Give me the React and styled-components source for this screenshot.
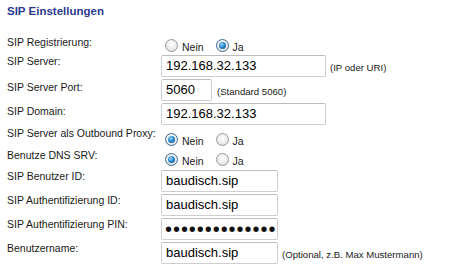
import React from 'react';
import styled, { createGlobalStyle, css } from 'styled-components';

const GlobalStyle = createGlobalStyle`
  html, body {
    margin: 0;
    padding: 0;
    background: #ffffff;
  }
  body {
    font-family: 'Liberation Sans', Arial, sans-serif;
  }
`;

const Page = styled.div`
  width: 459px;
  height: 275px;
  box-sizing: border-box;
  padding: 0 0 0 7px;
  background: #ffffff;
  overflow: hidden;
`;

const Title = styled.h2`
  margin: 0;
  padding: 4px 0 0 0;
  height: 33px;
  box-sizing: border-box;
  font-size: 11.5px;
  line-height: 14px;
  font-weight: bold;
  color: #2b3b8e;
`;

const Row = styled.div`
  display: flex;
  align-items: flex-start;
  height: ${props => props.h || 24}px;
`;

const Label = styled.div`
  width: 154px;
  flex-shrink: 0;
  padding-top: ${props => props.pt || 1}px;
  font-size: 10.5px;
  line-height: 13px;
  color: #1a1a1a;
  white-space: nowrap;
`;

const Value = styled.div`
  display: flex;
  align-items: center;
  padding-top: ${props => props.pt || 1}px;
`;

const Input = styled.div`
  box-sizing: border-box;
  width: ${props => props.w}px;
  height: 22px;
  border: 1px solid #cfcfcf;
  border-top-color: #bdbdbd;
  border-radius: 2px;
  background: #ffffff;
  padding: 0 0 0 4px;
  font-size: 13px;
  line-height: 20px;
  color: #000000;
  white-space: nowrap;
  overflow: hidden;
  ${props => props.secret && css`
    font-size: 20px;
    letter-spacing: 0.95px;
    padding-left: 3px;
    color: #111111;
  `}
`;

const Hint = styled.span`
  margin-left: ${props => props.ml || 4}px;
  padding-top: 3px;
  font-size: 9.6px;
  color: #1a1a1a;
  white-space: nowrap;
`;

const RadioGroup = styled.div`
  display: flex;
  align-items: center;
  padding-left: 4px;
`;

const RadioDot = styled.span`
  box-sizing: border-box;
  width: 13px;
  height: 13px;
  border-radius: 50%;
  border: 1px solid #9a9a9a;
  background: radial-gradient(circle at 50% 40%, #ffffff 0%, #ececec 55%, #d4d4d4 100%);
  display: flex;
  align-items: center;
  justify-content: center;
  ${props => props.checked && css`
    border-color: #3c6d9c;
    &:after {
      content: '';
      width: 7px;
      height: 7px;
      border-radius: 50%;
      background: radial-gradient(circle at 40% 35%, #9fd6f7 0%, #2a8ad0 45%, #0d4f8c 100%);
    }
  `}
`;

const RadioText = styled.span`
  margin: 3px 12px 0 4px;
  font-size: 10.5px;
  color: #1a1a1a;
`;

const Radio = ({ yes }) => (
  <RadioGroup>
    <RadioDot checked={!yes} />
    <RadioText>Nein</RadioText>
    <RadioDot checked={yes} />
    <RadioText>Ja</RadioText>
  </RadioGroup>
);

export default function App() {
  return (
    <Page>
      <GlobalStyle />
      <Title>SIP Einstellungen</Title>

      <Row h={21}>
        <Label pt={3}>SIP Registrierung:</Label>
        <Value pt={5}><Radio yes /></Value>
      </Row>

      <Row>
        <Label>SIP Server:</Label>
        <Value>
          <Input w={165}>192.168.32.133</Input>
          <Hint>(IP oder URI)</Hint>
        </Value>
      </Row>

      <Row>
        <Label pt={3}>SIP Server Port:</Label>
        <Value>
          <Input w={51}>5060</Input>
          <Hint ml={5}>(Standard 5060)</Hint>
        </Value>
      </Row>

      <Row>
        <Label pt={3}>SIP Domain:</Label>
        <Value>
          <Input w={165}>192.168.32.133</Input>
        </Value>
      </Row>

      <Row h={22}>
        <Label pt={1}>SIP Server als Outbound Proxy:</Label>
        <Value pt={6}><Radio /></Value>
      </Row>

      <Row h={21}>
        <Label pt={0}>Benutze DNS SRV:</Label>
        <Value pt={4}><Radio /></Value>
      </Row>

      <Row>
        <Label>SIP Benutzer ID:</Label>
        <Value>
          <Input w={117}>baudisch.sip</Input>
        </Value>
      </Row>

      <Row>
        <Label>SIP Authentifizierung ID:</Label>
        <Value>
          <Input w={117}>baudisch.sip</Input>
        </Value>
      </Row>

      <Row>
        <Label>SIP Authentifizierung PIN:</Label>
        <Value>
          <Input w={117} secret>••••••••••••••</Input>
        </Value>
      </Row>

      <Row>
        <Label>Benutzername:</Label>
        <Value>
          <Input w={117}>baudisch.sip</Input>
          <Hint>(Optional, z.B. Max Mustermann)</Hint>
        </Value>
      </Row>
    </Page>
  );
}
